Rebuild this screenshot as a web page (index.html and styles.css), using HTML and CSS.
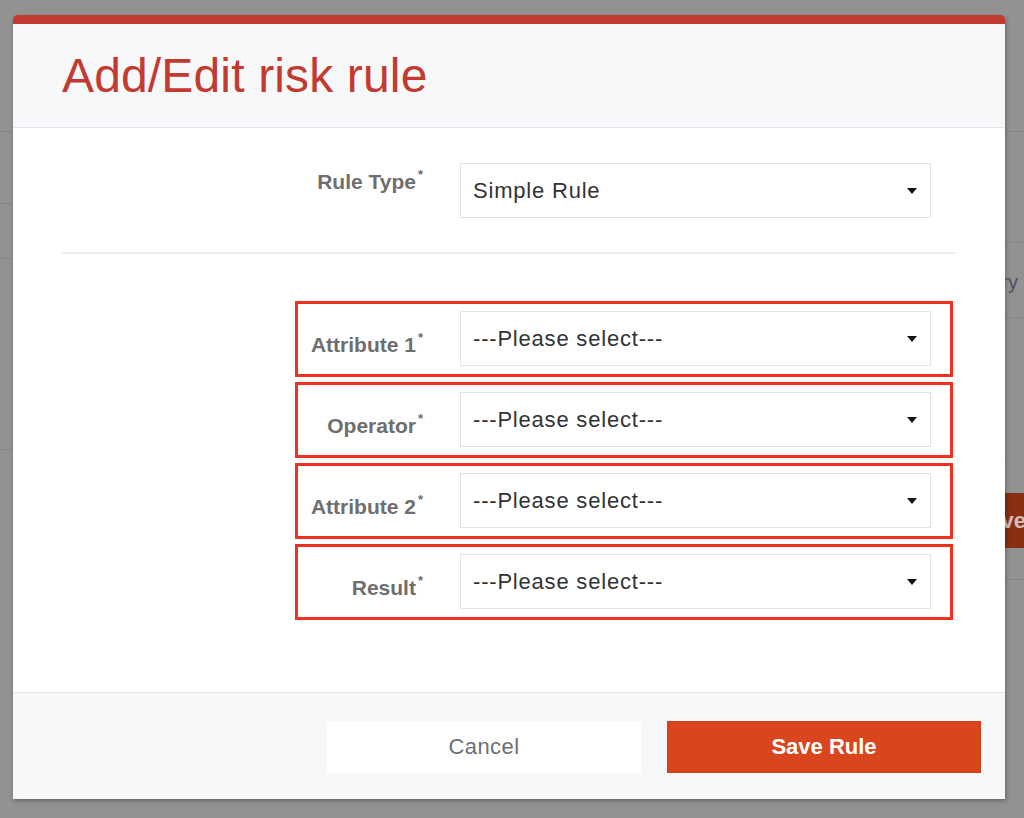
FILE: index.html
```html
<!DOCTYPE html>
<html lang="en">
<head>
<meta charset="utf-8">
<title>Add/Edit risk rule</title>
<link rel="stylesheet" href="styles.css">
</head>
<body>
  <div class="page">
    <div class="page-top"></div>
    <div class="page-cols">
      <div class="col-left">
        <div class="prow h72"></div>
        <div class="prow h55"></div>
        <div class="prow h103 dotted"></div>
        <div class="prow h88"></div>
      </div>
      <div class="col-right">
        <div class="prow h111"></div>
        <div class="prow h75 cat"><span class="cat-text">Category</span></div>
        <div class="prow h142 dotted"></div>
        <div class="prow h120 act"><span class="dim-btn">Save</span></div>
      </div>
    </div>
  </div>

  <div class="modal">
    <div class="modal-header">
      <h1 class="modal-title">Add/Edit risk rule</h1>
    </div>
    <div class="modal-body">
      <div class="field-wrap">
        <div class="field">
          <label class="field-label">Rule Type<sup>*</sup></label>
          <div class="select"><span class="select-text">Simple Rule</span><span class="caret"></span></div>
        </div>
      </div>
      <div class="separator"></div>
      <div class="field-wrap highlight">
        <div class="field">
          <label class="field-label low">Attribute 1<sup>*</sup></label>
          <div class="select"><span class="select-text">---Please select---</span><span class="caret"></span></div>
        </div>
      </div>
      <div class="field-wrap highlight">
        <div class="field">
          <label class="field-label low">Operator<sup>*</sup></label>
          <div class="select"><span class="select-text">---Please select---</span><span class="caret"></span></div>
        </div>
      </div>
      <div class="field-wrap highlight">
        <div class="field">
          <label class="field-label low">Attribute 2<sup>*</sup></label>
          <div class="select"><span class="select-text">---Please select---</span><span class="caret"></span></div>
        </div>
      </div>
      <div class="field-wrap highlight">
        <div class="field">
          <label class="field-label low">Result<sup>*</sup></label>
          <div class="select"><span class="select-text">---Please select---</span><span class="caret"></span></div>
        </div>
      </div>
    </div>
    <div class="modal-footer">
      <button class="btn btn-cancel" type="button">Cancel</button>
      <button class="btn btn-save" type="button">Save Rule</button>
    </div>
  </div>
</body>
</html>
```

FILE: styles.css
```css
* { box-sizing: border-box; }

html, body {
  margin: 0;
  padding: 0;
  width: 1024px;
  height: 818px;
  overflow: hidden;
}

body {
  background: #929292;
  font-family: "Liberation Sans", Arial, sans-serif;
  position: relative;
}

/* dimmed page behind the dialog */
.page {
  width: 1024px;
  height: 818px;
  background: #929292;
  overflow: hidden;
}
.page-top {
  height: 132px;
  border-bottom: 1px solid #868686;
}
.page-cols {
  display: flex;
  justify-content: space-between;
}
.col-left { width: 300px; }
.col-right { width: 300px; }
.prow { border-bottom: 1px solid #868686; position: relative; }
.prow.dotted { border-bottom: 1px dotted #8a8a8a; }
.h72 { height: 72px; }
.h55 { height: 55px; }
.h103 { height: 103px; }
.h88 { height: 88px; }
.h111 { height: 111px; }
.h75 { height: 75px; }
.h142 { height: 142px; }
.h120 { height: 120px; }

.cat {
  display: flex;
  align-items: center;
  justify-content: flex-end;
  padding-right: 6px;
  padding-top: 4px;
}
.cat-text {
  font-size: 20px;
  color: #4c5158;
}
.act {
  display: flex;
  align-items: flex-start;
  justify-content: flex-end;
  padding-top: 33px;
}
.dim-btn {
  display: block;
  width: 70px;
  height: 55px;
  margin-right: -2px;
  background: #8a2f14;
  color: #d2bcb4;
  font-size: 22px;
  font-weight: bold;
  line-height: 55px;
  text-align: right;
  overflow: hidden;
}

/* dialog */
.modal {
  position: absolute;
  left: 13px;
  top: 15px;
  width: 992px;
  border-top: 9px solid #c23a30;
  border-radius: 5px 5px 0 0;
  background: #fff;
  box-shadow: 1px 2px 4px rgba(0, 0, 0, 0.3);
}

.modal-header {
  height: 104px;
  background: #f7f8fa;
  border-bottom: 1px solid #e3e4e7;
  padding: 24px 49px 0;
}
.modal-title {
  margin: 0;
  font-size: 48px;
  line-height: 56px;
  font-weight: normal;
  letter-spacing: 0.15px;
  color: #c23a30;
}

.modal-body {
  height: 564px;
  padding: 25px 0 0 282px;
}

.field-wrap {
  width: 658px;
  border: 3px solid transparent;
  padding: 7px 19px 7px 0;
}
.field-wrap.highlight {
  border-color: #f2301f;
  height: 76px;
  margin-bottom: 5px;
}

.field {
  display: flex;
  align-items: flex-start;
}
.field-label {
  width: 130px;
  flex: none;
  text-align: right;
  padding-right: 5px;
  padding-top: 7px;
  font-size: 21px;
  line-height: 24px;
  font-weight: bold;
  color: #6e6e6e;
}
.field-label.low { padding-top: 22px; }
.field-label sup {
  font-size: 13px;
  line-height: 0;
  position: relative;
  top: -2px;
  margin-left: 2px;
  vertical-align: super;
}

.select {
  width: 471px;
  height: 55px;
  margin-left: 32px;
  border: 1px solid #e3e3e3;
  background: #fff;
  display: flex;
  align-items: center;
  justify-content: space-between;
  padding: 0 13px 0 12px;
}
.select-text {
  font-size: 22px;
  letter-spacing: 0.8px;
  color: #333;
}
.caret {
  width: 0;
  height: 0;
  border-left: 5px solid transparent;
  border-right: 5px solid transparent;
  border-top: 6px solid #111;
}

.separator {
  height: 2px;
  background: #eeeeee;
  width: 894px;
  margin: 24px 0 47px -233px;
}

.modal-footer {
  height: 107px;
  background: #f7f8fa;
  border-top: 1px solid #e3e4e7;
  display: flex;
  justify-content: flex-end;
  align-items: flex-start;
  gap: 26px;
  padding: 28px 24px 0 0;
}
.btn {
  width: 314px;
  height: 52px;
  border: none;
  font-family: "Liberation Sans", Arial, sans-serif;
  font-size: 22px;
  cursor: pointer;
}
.btn-cancel {
  background: #fff;
  color: #6b7075;
  letter-spacing: 0.4px;
}
.btn-save {
  background: #d9461e;
  border: 1px solid #d04019;
  color: #fff;
  font-weight: bold;
}
```
